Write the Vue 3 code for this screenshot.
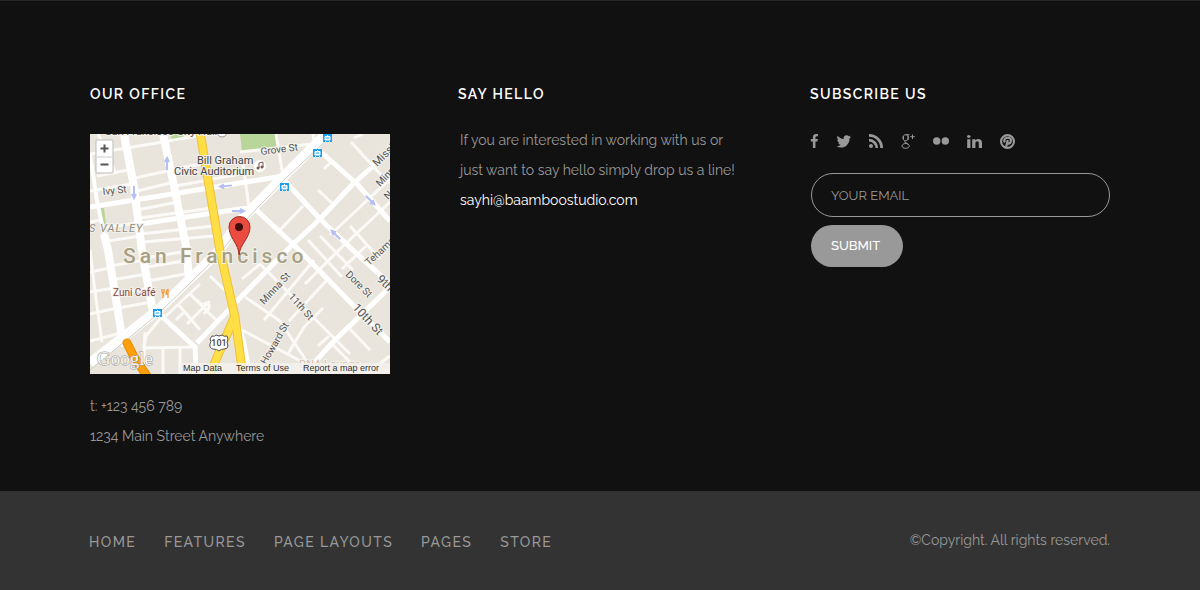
<script setup>
const thinRoads = [
  'M0 20L73 8L112 1', 'M7 42L38 36', 'M40 45L110 30', 'M43 58L80 49', 'M86 52L150 40', 'M80 36L116 29',
  'M47 76L88 68', 'M50 84L122 74', 'M50 100L124 92', 'M53 108L124 102', 'M10 94L47 89', 'M12 108L50 102',
  'M0 57L42 50', 'M0 88L10 86', 'M8 0L26 40', 'M55 124L92 118', 'M57 133L94 127', 'M20 132L54 126',
  'M22 146L56 140', 'M0 138L20 134', 'M0 158L24 154', 'M26 160L60 154', 'M28 174L62 168', 'M58 147L95 140',
  'M0 180L27 174', 'M0 207L31 199', 'M0 116L4 150L12 208', 'M120 142L147 168', 'M110 150L96 163L76 182',
  'M88 170L110 196', 'M100 160L127 187', 'M97 190L120 167', 'M86 186L94 178',
  'M107 166L112 171Q120 166 119 174L114 180', 'M55 198L53 240', 'M74 180L56 202L54 214L106 213',
  'M73 213L73 240', 'M90 213L90 240', 'M186 0L193 42', 'M150 18L222 10', 'M223 0L225 16', 'M152 24L159 73',
  'M261 8L292 42L300 49', 'M264 4L273 0', 'M242 27L234 35', 'M228 56L245 72', 'M213 72L187 99',
  'M300 45L240 101', 'M300 68L250 115L215 150', 'M218 106L252 143', 'M230 102L263 136',
  'M224 126L174 186', 'M237 146L199 187', 'M233 174L214 193L198 220',
  'M155 163L190 187L225 240', 'M170 130L202 162L260 220', 'M239 202L228 212',
  'M260 195L280 216', 'M152 196L220 232', 'M300 222L276 240', 'M240 208L270 238', 'M276 112L252 135',
  'M260 92L290 125', 'M152 145L170 130'
]
const roads = [
  'M0 73L70 62L193 42', 'M50 90L150 75L162 74', 'M222 10L267 50L300 87', 'M193 45L230 85L267 120L300 150',
  'M163 73L203 110L263 171L300 208', 'M300 17L263 50L230 85L200 113L150 164L107 209', 'M300 153L243 208L225 228',
  'M68 179L105 213L106 240', 'M144 178L153 206L160 240'
]
const avenues = ['M34 0L44 53L52 117L62 173L68 179', 'M73 0L85 57L97 117L99 148', 'M14 100L18 116L32 203L35 212']
const stops = [[233, 0], [223, 15], [190, 49], [63, 175]]
const arrows = [
  [77, 30, -90], [44, 58, 90], [136, 52, 174], [148, 77, 0], [280, 66, 45], [246, 101, 225]
]
const socials = [
  { name: 'Facebook', box: '380 0 970 1664', w: 8, h: 14, d: 'M1343 12v264h-157q-86 0-116 36t-30 108v189h293l-39 296h-254v759h-306v-759h-255v-296h255v-218q0-186 104-288.5t277-102.5q147 0 228 12z' },
  { name: 'Twitter', box: '44 240 1640 1340', w: 15, h: 13, d: 'M1684 408q-67 98-162 167 1 14 1 42 0 130-38 259.5t-115.5 248.5-184.5 210.5-258 146-323 54.5q-271 0-496-145 35 4 78 4 225 0 401-138-105-2-188-64.5t-114-159.5q33 5 61 5 43 0 85-11-112-23-185.5-111.5t-73.5-205.5v-4q68 38 146 41-66-44-105-115t-39-154q0-88 44-163 121 149 294.5 238.5t371.5 99.5q-8-38-8-74 0-134 94.5-228.5t228.5-94.5q140 0 236 102 109-21 205-78-37 115-142 178 93-10 186-50z' },
  { name: 'RSS', box: '0 0 14 14', w: 14, h: 14, d: 'M2 10a2 2 0 1 1 0 4a2 2 0 0 1 0-4zM0 4.800a9.200 9.200 0 0 1 9.200 9.200H6.400A6.400 6.400 0 0 0 0 7.600zM0 0a14 14 0 0 1 14 14h-2.800A11.200 11.200 0 0 0 0 2.800z' },
  { name: 'Google Plus', box: '0 0 14 15', w: 14, h: 15, thin: true, d: 'M8.500 .7H5C3 .7 2 2 2 3.800S3 6.700 4.700 6.700S7.300 5.500 7.300 3.800S6.400.8 5 .8M4.500 6.700C2.800 8 4 8.700 5.300 9.200C7.400 10 8.200 10.700 8.200 12S7 14.300 4.700 14.300S1 13.400 1 12S2.400 9.600 5.300 9.400M7 1.500V6M2.400 2V5.500M4 8.500L7.500 10.500M11.500 .5V5M9.300 2.700H13.700' },
  { name: 'Flickr', box: '0 0 16 8', w: 16, h: 8, d: 'M3.700 .3a3.700 3.700 0 1 1 0 7.400a3.700 3.700 0 0 1 0-7.400zM12.300 .3a3.700 3.700 0 1 1 0 7.400a3.700 3.700 0 0 1 0-7.400z' },
  { name: 'LinkedIn', box: '128 148 1536 1468', w: 15, h: 13, d: 'M477 625v991h-330v-991h330zm21-306q1 73-50.500 122t-135.500 49h-2q-82 0-132-49t-50-122q0-74 51.500-122.500t134.500-48.500 133 48.500 51 122.500zm1166 729v568h-329v-530q0-105-40.500-164.500t-126.500-59.500q-63 0-105.500 34.500t-63.500 85.500q-11 30-11 81v553h-329q2-399 2-647t-1-296l-1-48h329v144h-2q20-32 41-56t56.500-52 87-43.500 114.500-15.500q171 0 275 113.500t104 332.500z' },
  { name: 'Pinterest', box: '0 0 14 14', w: 15, h: 15, pin: true, d: 'M4.600 7.900C3 5.600 4.600 3.500 7.200 3.500C9.300 3.500 10.400 4.600 10.200 6.200C10 8 8.900 9.100 7.700 9C6.800 8.900 6.500 8.300 6.700 7.500M7.300 5.600L5.600 12.500' }
]
const links = ['Home', 'Features', 'Page Layouts', 'Pages', 'Store']
</script>

<template>
  <footer class="footer">
    <div class="columns">
      <section>
        <h2>OUR OFFICE</h2>
        <svg class="map" viewBox="0 0 300 240" role="img" aria-label="Map of San Francisco">
          <rect width="300" height="240" fill="#e9e5dc" />
          <path d="M150 0H186L187 13L152 18Z M80 0H94L92 6L83 8Z M10 74H14L16 90H12Z" fill="#b9d69a" />
          <g fill="none" stroke="#fbfaf7" stroke-linejoin="round">
            <path v-for="d in thinRoads" :key="d" :d="d" stroke-width="3" />
          </g>
          <g fill="none" stroke="#fff" stroke-linejoin="round">
            <path d="M0 20L7 67L14 100" stroke-width="4" />
            <path v-for="d in roads" :key="d" :d="d" stroke-width="5" />
            <path v-for="d in avenues" :key="d" :d="d" stroke-width="8" />
            <path d="M0 229L68 176L127 119L150 87L193 43L240 -4" stroke-width="10" />
            <path d="M0 236L68 180L128 122L153 89L196 44L243 0" stroke="#cfccc6" stroke-width="1" />
          </g>
          <g fill="none" stroke-linejoin="round">
            <path d="M110 -2L130 117L145 183L153 242M144 184L119 242" stroke="#eec136" stroke-width="9" />
            <path d="M110 -2L130 117L145 183L153 242M144 184L119 242" stroke="#ffdf45" stroke-width="7" />
            <path d="M37 209L44 223L57 242" stroke="#e88a00" stroke-width="9" stroke-linecap="round" />
            <path d="M37 209L44 223L57 242" stroke="#ff9f0c" stroke-width="7" stroke-linecap="round" />
          </g>
          <g v-for="a in arrows" :key="a[0]" :transform="`translate(${a[0]} ${a[1]}) rotate(${a[2]})`">
            <path d="M-6 0H5M2 -2L6 0L2 2" fill="none" stroke="#b4bff3" stroke-width="2" />
          </g>
          <g v-for="s in stops" :key="s[0]" :transform="`translate(${s[0]} ${s[1]})`">
            <rect width="9" height="8" fill="#1a9fee" />
            <path d="M2 2.500H7V6H2zM3 7L2 8M6 7L7 8M4.500 1V2.500" fill="#fff" stroke="#fff" stroke-width="1" />
            <path d="M3 4H6" stroke="#1a9fee" />
          </g>
          <circle cx="170" cy="32" r="6" fill="#fff" />
          <path d="M169 34V29L173 28V33" fill="none" stroke="#76564b" stroke-width="1" />
          <circle cx="168" cy="34" r="1.500" fill="#76564b" /><circle cx="172" cy="33" r="1.500" fill="#76564b" />
          <circle cx="132" cy="-2" r="5" fill="#fff" stroke="#999" />

          <g class="label">
            <text x="15" y="1" font-size="11" fill="#444">San Francisco City Hall</text>
            <text x="107" y="30" font-size="11" fill="#444">Bill Graham</text>
            <text x="84" y="41" font-size="11" fill="#444">Civic Auditorium</text>
            <text x="23" y="162" font-size="10" fill="#86493c">Zuni Café</text>
            <text transform="translate(13 61) rotate(-6)">Ivy St</text>
            <text transform="translate(171 21) rotate(-7)">Grove St</text>
            <text x="-1" y="98" font-size="11" font-style="italic" fill="#928f80" class="spaced">S VALLEY</text>
            <text transform="translate(287 33) rotate(-45)" font-size="11">Mission</text>
            <text transform="translate(290 53) rotate(-46)">Minna</text>
            <text transform="translate(298 66) rotate(-46)">Natoma</text>
            <text transform="translate(279 132) rotate(-43)">Tehama</text>
            <text transform="translate(174 171) rotate(-47)">Minna St</text>
            <text transform="translate(198 163) rotate(48)">11th St</text>
            <text transform="translate(255 141) rotate(45)">Dore St</text>
            <text transform="translate(286 146) rotate(43)" font-size="12">9th St</text>
            <text transform="translate(262 174) rotate(47)" font-size="12">10th St</text>
            <text transform="translate(176 231) rotate(-60)">Howard St</text>
            <text x="209" y="234" font-size="11" fill="#d3bfb4">DNA Lounge</text>
          </g>
          <text class="city" x="33" y="129">San Francisco</text>
          <path d="M72 155V158Q72 159 73 159V164M74 155V158Q74 159 73 159M78 164V155Q76 156 76 160H78" fill="none" stroke="#f4820c" stroke-width="1" />
          <path d="M122 202Q125 203 126 201Q129 203 132 201Q134 203 137 202L138 205Q136 208 138 212Q138 215 134 215Q131 215 129 217Q127 215 123 215Q119 214 120 210Q122 207 120 205Z" fill="#fff" stroke="#555" />
          <text x="129" y="212" font-size="9" font-weight="500" text-anchor="middle" fill="#444">101</text>
          <path d="M149 121C149 110 139 104 139 93A10 10 0 0 1 160 93C160 104 150 110 149 121Z" fill="#ea4c3f" stroke="#9c2b24" />
          <circle cx="149" cy="93" r="4" fill="#400d0b" />
          <text class="brand" x="7" y="231">Google</text>
          <rect x="90" y="229" width="210" height="11" fill="#f5f3ef" opacity=".8" />
          <g class="credit">
            <text x="93" y="237">Map Data</text>
            <text x="146" y="237">Terms of Use</text>
            <text x="213" y="237">Report a map error</text>
          </g>
          <rect x="6" y="6" width="17" height="33" rx="1" fill="#fff" stroke="#bbb" />
          <path d="M7 23H22" stroke="#ccc" />
          <path d="M10.500 14.500H18.500M14.500 10.500V18.500M10.500 30.500H18.500" stroke="#555" stroke-width="2" />
        </svg>
        <address class="copy">t: +123 456 789<br />1234 Main Street Anywhere</address>
      </section>

      <section>
        <h2>SAY HELLO</h2>
        <p class="copy hello">
          If you are interested in working with us or<br />just want to say hello simply drop us a line!<br />
          <a href="mailto:sayhi@baamboostudio.com">sayhi@baamboostudio.com</a>
        </p>
      </section>

      <section>
        <h2>SUBSCRIBE US</h2>
        <div class="socials">
          <a v-for="s in socials" :key="s.name" href="#" :aria-label="s.name">
            <svg :viewBox="s.box" :width="s.w" :height="s.h" preserveAspectRatio="none">
              <circle v-if="s.pin" cx="7" cy="7" r="6" class="line" />
              <path :d="s.d" :class="{ line: s.pin, thin: s.thin }" />
            </svg>
          </a>
        </div>
        <form class="subscribe" @submit.prevent>
          <input type="email" placeholder="YOUR EMAIL" aria-label="Your email" />
          <button type="submit">SUBMIT</button>
        </form>
      </section>
    </div>

    <div class="bottom">
      <nav>
        <a v-for="l in links" :key="l" href="#">{{ l }}</a>
      </nav>
      <small>©Copyright. All rights reserved.</small>
    </div>
  </footer>
</template>

<style>
body { margin: 0; background: #333; }
</style>

<style scoped>
.footer { font: 14px/30px Raleway, Lato, sans-serif; color: #999; background: #111; border-top: 1px solid #252525; }
.columns { display: grid; grid-template-columns: 368fr 352fr 300fr; padding: 78px 90px 40px; }
h2 { margin: 0; font-size: 14px; line-height: 30px; font-weight: 600; letter-spacing: 0.1em; color: #fff; }
.map { display: block; width: 100%; max-width: 300px; margin: 25px 0 17px; }
.label { font-size: 10px; fill: #555; stroke: #f3f1ec; stroke-width: 2px; paint-order: stroke; }
.spaced { letter-spacing: 1px; }
svg text { font-family: Roboto, sans-serif; }
svg .city { font-size: 21px; font-weight: 500; letter-spacing: 4px; fill: #a69f83; stroke: #f5f3ec; stroke-width: 2px; paint-order: stroke; }
svg .brand { font: 19px "Liberation Serif", serif; fill: #f5f5f3; stroke: #999; stroke-width: 1px; paint-order: stroke; }
svg .credit text { font: 9px "Liberation Sans", sans-serif; fill: #333; }
.copy { margin: 0; font-size: 14px; line-height: 30px; font-style: normal; }
.hello { margin: 16px 0 0 2px; }
.hello a { color: #fff; text-decoration: none; }
.socials { display: flex; align-items: center; gap: 18px; height: 16px; margin: 24px 0; }
.socials a { display: flex; color: #999; }
.socials svg { fill: currentColor; }
.socials .line { fill: none; stroke: currentColor; stroke-width: 2px; }
.socials .thin { fill: none; stroke: currentColor; stroke-width: 1px; }
.subscribe { display: flex; flex-direction: column; align-items: flex-start; gap: 8px; margin-left: 1px; }
input { box-sizing: border-box; width: 100%; height: 44px; padding: 0 19px; border: 1px solid #999; border-radius: 22px; background: transparent; font: inherit; font-size: 13px; color: #999; outline: none; }
input::placeholder { color: #999; opacity: 1; }
button { height: 42px; padding: 0 23px 0 20px; border: 0; border-radius: 21px; background: #999; font: inherit; font-size: 13px; font-weight: 500; color: #fff; cursor: pointer; }
.bottom { display: flex; justify-content: space-between; align-items: center; padding: 32px 90px 33px 89px; background: #333; }
nav { display: flex; gap: 28px; padding-top: 4px; }
nav a { color: #999; text-decoration: none; text-transform: uppercase; letter-spacing: 0.1em; font-weight: 500; }
small { font-size: 14px; }
</style>
